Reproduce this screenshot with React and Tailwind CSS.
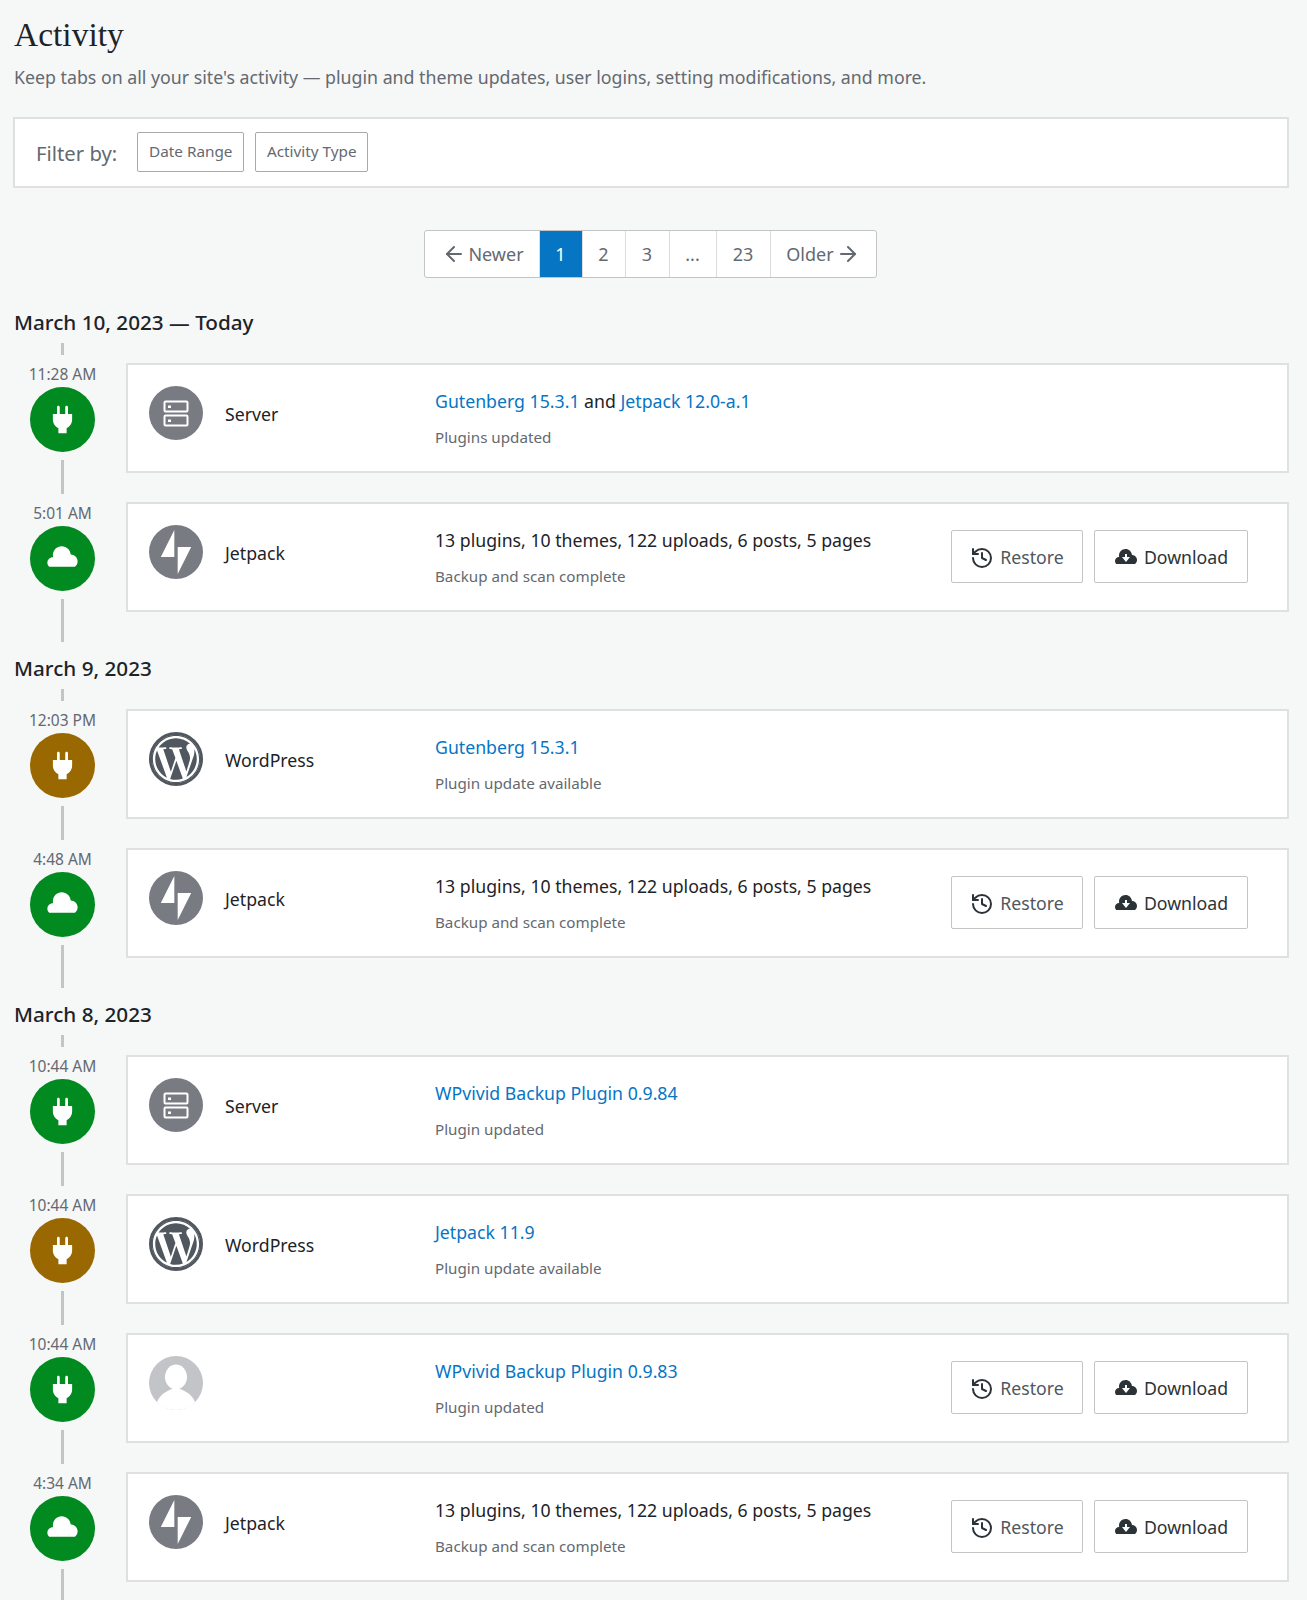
import { ArrowLeft, ArrowRight, History } from "lucide-react";
import { FaWordpress } from "react-icons/fa";

const GREEN = "bg-[#008a20]";
const YELLOW = "bg-[#996800]";

const sections = [
  {
    date: "March 10, 2023 — Today",
    rows: [
      { time: "11:28 AM", kind: "plugin", color: GREEN, actor: "server", name: "Server", title: "both", sub: "Plugins updated" },
      { time: "5:01 AM", kind: "cloud", color: GREEN, actor: "jetpack", name: "Jetpack", title: "backup", sub: "Backup and scan complete", actions: true },
    ],
  },
  {
    date: "March 9, 2023",
    rows: [
      { time: "12:03 PM", kind: "plugin", color: YELLOW, actor: "wordpress", name: "WordPress", link: "Gutenberg 15.3.1", sub: "Plugin update available" },
      { time: "4:48 AM", kind: "cloud", color: GREEN, actor: "jetpack", name: "Jetpack", title: "backup", sub: "Backup and scan complete", actions: true },
    ],
  },
  {
    date: "March 8, 2023",
    rows: [
      { time: "10:44 AM", kind: "plugin", color: GREEN, actor: "server", name: "Server", link: "WPvivid Backup Plugin 0.9.84", sub: "Plugin updated" },
      { time: "10:44 AM", kind: "plugin", color: YELLOW, actor: "wordpress", name: "WordPress", link: "Jetpack 11.9", sub: "Plugin update available" },
      { time: "10:44 AM", kind: "plugin", color: GREEN, actor: "user", name: "", link: "WPvivid Backup Plugin 0.9.83", sub: "Plugin updated", actions: true },
      { time: "4:34 AM", kind: "cloud", color: GREEN, actor: "jetpack", name: "Jetpack", title: "backup", sub: "Backup and scan complete", actions: true },
    ],
  },
];

function PlugIcon() {
  return (
    <svg viewBox="0 0 24 24" className="w-[33px] h-[33px]" fill="#fff">
      <path d="M16 8V3c0-.552-.448-1-1-1s-1 .448-1 1v5h-4V3c0-.552-.448-1-1-1s-1 .448-1 1v5H5v4c0 2.79 1.637 5.193 4 6.317V22h6v-3.683c2.363-1.124 4-3.527 4-6.317V8h-3z" />
    </svg>
  );
}

function CloudIcon() {
  return (
    <svg viewBox="0 0 24 24" className="w-[33px] h-[33px]" fill="#fff">
      <path d="M18 9c-.009 0-.017.002-.025.003C17.72 5.646 14.922 3 11.5 3 7.91 3 5 5.91 5 9.5c0 .524.07 1.03.186 1.52C5.123 11.015 5.064 11 5 11c-2.21 0-4 1.79-4 4 0 1.202.54 2.267 1.38 3h18.593C22.196 17.09 23 15.643 23 14c0-2.76-2.24-5-5-5z" />
    </svg>
  );
}

function CloudDownloadIcon() {
  return (
    <svg viewBox="0 0 24 24" className="w-[24px] h-[24px]" fill="#2c3338">
      <path
        fillRule="evenodd"
        d="M18 9c-.009 0-.017.002-.025.003C17.72 5.646 14.922 3 11.5 3 7.91 3 5 5.91 5 9.5c0 .524.07 1.03.186 1.52C5.123 11.015 5.064 11 5 11c-2.21 0-4 1.79-4 4 0 1.202.54 2.267 1.38 3h18.593C22.196 17.09 23 15.643 23 14c0-2.76-2.24-5-5-5zm-6 7l-4-5h3V8h2v3h3l-4 5z"
      />
    </svg>
  );
}

function ActorIcon({ actor }) {
  if (actor === "server") {
    return (
      <svg viewBox="0 0 54 54" className="w-[54px] h-[54px]">
        <circle cx="27" cy="27" r="27" fill="#787c82" />
        <rect x="15.5" y="15.5" width="23" height="10" rx="1" fill="none" stroke="#fff" strokeWidth="2" />
        <rect x="15.5" y="29.5" width="23" height="10" rx="1" fill="none" stroke="#fff" strokeWidth="2" />
        <rect x="19" y="19.5" width="3" height="2.5" fill="#fff" />
        <rect x="19" y="33.5" width="3" height="2.5" fill="#fff" />
      </svg>
    );
  }
  if (actor === "jetpack") {
    return (
      <svg viewBox="0 0 32 32" className="w-[54px] h-[54px]">
        <circle cx="16" cy="16" r="16" fill="#787c82" />
        <polygon points="15,19 7,19 15,3" fill="#fff" />
        <polygon points="17,29 17,13 25,13" fill="#fff" />
      </svg>
    );
  }
  if (actor === "wordpress") {
    return (
      <div className="w-[54px] h-[54px] rounded-full border-[3px] border-[#50575e] flex items-center justify-center">
        <FaWordpress className="w-[50px] h-[50px] shrink-0 text-[#50575e]" />
      </div>
    );
  }
  return (
    <svg viewBox="0 0 54 54" className="w-[54px] h-[54px]">
      <circle cx="27" cy="27" r="27" fill="#c3c4c7" />
      <ellipse cx="27" cy="21" rx="11" ry="12.5" fill="#fff" />
      <path d="M8 46c3-8 10-11 15-13h8c5 2 12 5 15 13-4 5-11 8-19 8S12 51 8 46z" fill="#fff" />
    </svg>
  );
}

function ActionButton({ icon, label, width, dark }) {
  return (
    <button className={`${width} h-[53px] pt-[3px] bg-white border border-[#c3c4c7] rounded-[2px] flex items-center justify-center gap-[6px] text-[17.7px] ${dark ? "text-[#2c3338]" : "text-[#50575e]"}`}>
      {icon}
      {label}
    </button>
  );
}

function Title({ row }) {
  if (row.title === "both") {
    return (
      <p className="text-[17.7px] leading-[26px] text-[#1d2327]">
        <span className="text-[#0675c4]">Gutenberg 15.3.1</span> and <span className="text-[#0675c4]">Jetpack 12.0-a.1</span>
      </p>
    );
  }
  if (row.title === "backup") {
    return <p className="text-[17.7px] leading-[26px] text-[#1d2327]">13 plugins, 10 themes, 122 uploads, 6 posts, 5 pages</p>;
  }
  return <p className="text-[17.7px] leading-[26px] text-[#0675c4]">{row.link}</p>;
}

function Row({ row, last }) {
  return (
    <div className="flex">
      <div className="w-[112px] pr-[15px] flex flex-col items-center">
        <div className="text-[15.5px] leading-[22px] text-[#646970]">{row.time}</div>
        <div className={`${row.color} mt-[2px] w-[65px] h-[65px] rounded-full flex items-center justify-center`}>
          {row.kind === "plugin" ? <PlugIcon /> : <CloudIcon />}
        </div>
        <div className={`w-[3px] bg-[#c3c4c7] mt-[8px] ${last ? "h-[43px]" : "h-[34px] mb-[8px]"}`} />
      </div>
      <div className="flex-1 self-start h-[110px] bg-white border-2 border-[#e0e0e2] flex items-center pl-[21px] pr-[39px]">
        <div className="w-[54px] h-[54px] -mt-[11px] shrink-0">
          <ActorIcon actor={row.actor} />
        </div>
        <div className="w-[232px] pl-[22px] -mt-[7px] shrink-0 text-[17.7px] text-[#1d2327]">{row.name}</div>
        <div className="flex-1 -mt-[1px]">
          <Title row={row} />
          <p className="mt-[12px] text-[15.2px] leading-[22px] text-[#646970]">{row.sub}</p>
        </div>
        {row.actions && (
          <div className="flex gap-[11px] -mt-[2px]">
            <ActionButton width="w-[132px]" icon={<History className="w-[24px] h-[24px] text-[#2c3338]" />} label="Restore" />
            <ActionButton width="w-[154px]" icon={<CloudDownloadIcon />} label="Download" dark />
          </div>
        )}
      </div>
    </div>
  );
}

function PageCell({ children, active, width }) {
  return (
    <div className={`${width} h-full flex items-center justify-center gap-[2px] text-[18px] border-r border-[#dcdcde] last:border-r-0 ${active ? "bg-[#0675c4] text-white" : "text-[#646970]"}`}>
      {children}
    </div>
  );
}

export default function App() {
  return (
    <div className="h-[1600px] overflow-hidden bg-[#f6f7f7] pl-[14px] pr-[18px] pt-[10px] font-['Noto_Sans',sans-serif]">
      <h1 className="font-['Liberation_Serif',serif] text-[33.5px] leading-[50px] text-[#1d2327]">Activity</h1>
      <p className="mt-[4px] text-[17.75px] leading-[26px] text-[#646970]">
        Keep tabs on all your site's activity — plugin and theme updates, user logins, setting modifications, and more.
      </p>
      <div className="-ml-[1px] mt-[27px] h-[71px] bg-white border-2 border-[#e0e0e2] flex items-center pl-[21px]">
        <span className="text-[20.3px] pt-[2px] text-[#646970] mr-[20px]">Filter by:</span>
        <button className="w-[107px] h-[40px] -mt-[2px] border border-[#a7aaad] rounded-[2px] text-[15.3px] text-[#646970] mr-[11px]">Date Range</button>
        <button className="w-[113px] h-[40px] -mt-[2px] border border-[#a7aaad] rounded-[2px] text-[15.3px] text-[#646970]">Activity Type</button>
      </div>
      <div className="mt-[42px] flex justify-center pr-[3px]">
        <div className="h-[48px] bg-white border border-[#c3c4c7] rounded-[3px] flex overflow-hidden">
          <PageCell width="w-[115px] pl-[3px]"><ArrowLeft className="w-[24px] h-[24px]" /> Newer</PageCell>
          <PageCell active width="w-[43px]">1</PageCell>
          <PageCell width="w-[43px]">2</PageCell>
          <PageCell width="w-[44px]">3</PageCell>
          <PageCell width="w-[47px]">...</PageCell>
          <PageCell width="w-[54px]">23</PageCell>
          <PageCell width="w-[105px]">Older <ArrowRight className="w-[24px] h-[24px]" /></PageCell>
        </div>
      </div>
      {sections.map((section, i) => (
        <div key={section.date} className={i === 0 ? "mt-[29px]" : "mt-[11px]"}>
          <h2 className="text-[20.7px] leading-[30px] font-medium text-[#1d2327]">{section.date}</h2>
          <div className="w-[97px] flex justify-center mt-[6px] mb-[8px]">
            <div className="w-[3px] h-[12px] bg-[#c3c4c7]" />
          </div>
          {section.rows.map((row, j) => (
            <Row key={j} row={row} last={j === section.rows.length - 1} />
          ))}
        </div>
      ))}
    </div>
  );
}
